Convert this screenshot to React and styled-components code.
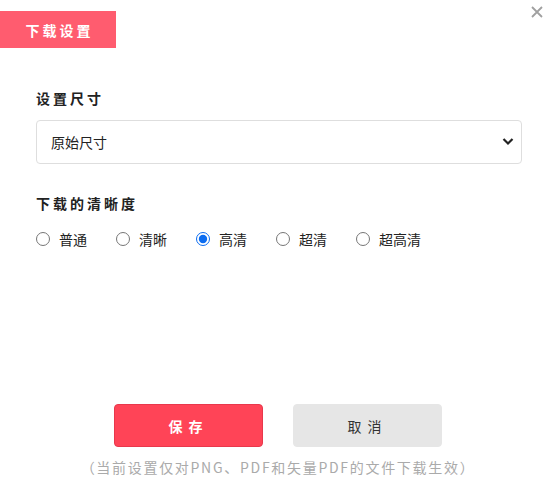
import styled, { createGlobalStyle } from 'styled-components'

const GlobalStyle = createGlobalStyle`
    body {
        margin: 0;
        background: #ffffff;
        font-family: "Noto Sans CJK SC", "Noto Sans", sans-serif;
    }
`

const Dialog = styled.div`
    position: relative;
    width: 556px;
    height: 493px;
    display: flex;
    flex-direction: column;
    box-sizing: border-box;
    padding-top: 11px;
`
const Tab = styled.div`
    width: 116px;
    height: 37px;
    background: #ff5c6f;
    color: #ffffff;
    font-size: 14px;
    font-weight: 700;
    letter-spacing: 3px;
    padding-left: 3px;
    box-sizing: border-box;
    display: flex;
    align-items: center;
    justify-content: center;
`
const Close = styled.button`
    position: absolute;
    top: 2px;
    right: 9px;
    width: 20px;
    height: 20px;
    padding: 0;
    border: none;
    background: none;
    display: flex;
    align-items: center;
    justify-content: center;
    cursor: pointer;
`
const Body = styled.div`
    padding: 40px 34px 0 36px;
    display: flex;
    flex-direction: column;
    flex: 1;
`
const Label = styled.div`
    font-size: 14px;
    font-weight: 700;
    color: #222;
    letter-spacing: 3px;
    line-height: 20px;
    margin-bottom: ${(p) => p.$gap}px;
`
const SelectWrap = styled.div`
    position: relative;
    margin-bottom: 29px;
`
const Select = styled.select`
    width: 100%;
    height: 44px;
    appearance: none;
    border: 1px solid #dedede;
    border-radius: 4px;
    background: #fff;
    padding: 0 14px;
    font-family: inherit;
    font-size: 14px;
    color: #222;
    outline: none;
`
const Chevron = styled.svg`
    position: absolute;
    right: 8px;
    top: 17px;
    pointer-events: none;
`
const Radios = styled.div`
    display: flex;
    gap: 29px;
`
const Option = styled.label`
    display: flex;
    align-items: center;
    font-size: 14px;
    color: #222;
    line-height: 20px;
    cursor: pointer;
`
const Radio = styled.input`
    width: 14px;
    height: 14px;
    margin: 0 9px 0 0;
    accent-color: #0b6cf0;
`
const Footer = styled.div`
    display: flex;
    flex-direction: column;
    align-items: center;
    padding-bottom: 16px;
`
const Buttons = styled.div`
    display: flex;
    gap: 30px;
`
const Button = styled.button`
    width: 149px;
    height: 43px;
    border-radius: 4px;
    border: 1px solid ${(p) => (p.$primary ? '#e8384c' : '#e6e6e6')};
    background: ${(p) => (p.$primary ? '#ff4457' : '#e6e6e6')};
    color: ${(p) => (p.$primary ? '#ffffff' : '#333333')};
    font-family: inherit;
    font-size: 14px;
    font-weight: ${(p) => (p.$primary ? 700 : 400)};
    letter-spacing: 6px;
    padding-left: 6px;
    cursor: pointer;
`
const Note = styled.div`
    margin-top: 10px;
    font-size: 14px;
    color: #aaaaaa;
    letter-spacing: 1.7px;
    line-height: 20px;
`

const levels = ['普通', '清晰', '高清', '超清', '超高清']

export default function App() {
    return (
        <>
            <GlobalStyle />
            <Dialog>
                <Tab>下载设置</Tab>
                <Close aria-label="关闭">
                    <svg width="12" height="12" viewBox="0 0 12 12">
                        <path d="M1 1 L11 11 M11 1 L1 11" stroke="#a0a0a0" strokeWidth="1.8" />
                    </svg>
                </Close>
                <Body>
                    <Label $gap={12}>设置尺寸</Label>
                    <SelectWrap>
                        <Select defaultValue="original">
                            <option value="original">原始尺寸</option>
                        </Select>
                        <Chevron width="12" height="9" viewBox="0 0 12 9">
                            <path d="M1.5 2 L6 6.5 L10.5 2" fill="none" stroke="#222" strokeWidth="2.2" />
                        </Chevron>
                    </SelectWrap>
                    <Label $gap={16}>下载的清晰度</Label>
                    <Radios>
                        {levels.map((l) => (
                            <Option key={l}>
                                <Radio type="radio" name="q" defaultChecked={l === '高清'} />
                                {l}
                            </Option>
                        ))}
                    </Radios>
                </Body>
                <Footer>
                    <Buttons>
                        <Button $primary>保存</Button>
                        <Button>取消</Button>
                    </Buttons>
                    <Note>（当前设置仅对PNG、PDF和矢量PDF的文件下载生效）</Note>
                </Footer>
            </Dialog>
        </>
    )
}
